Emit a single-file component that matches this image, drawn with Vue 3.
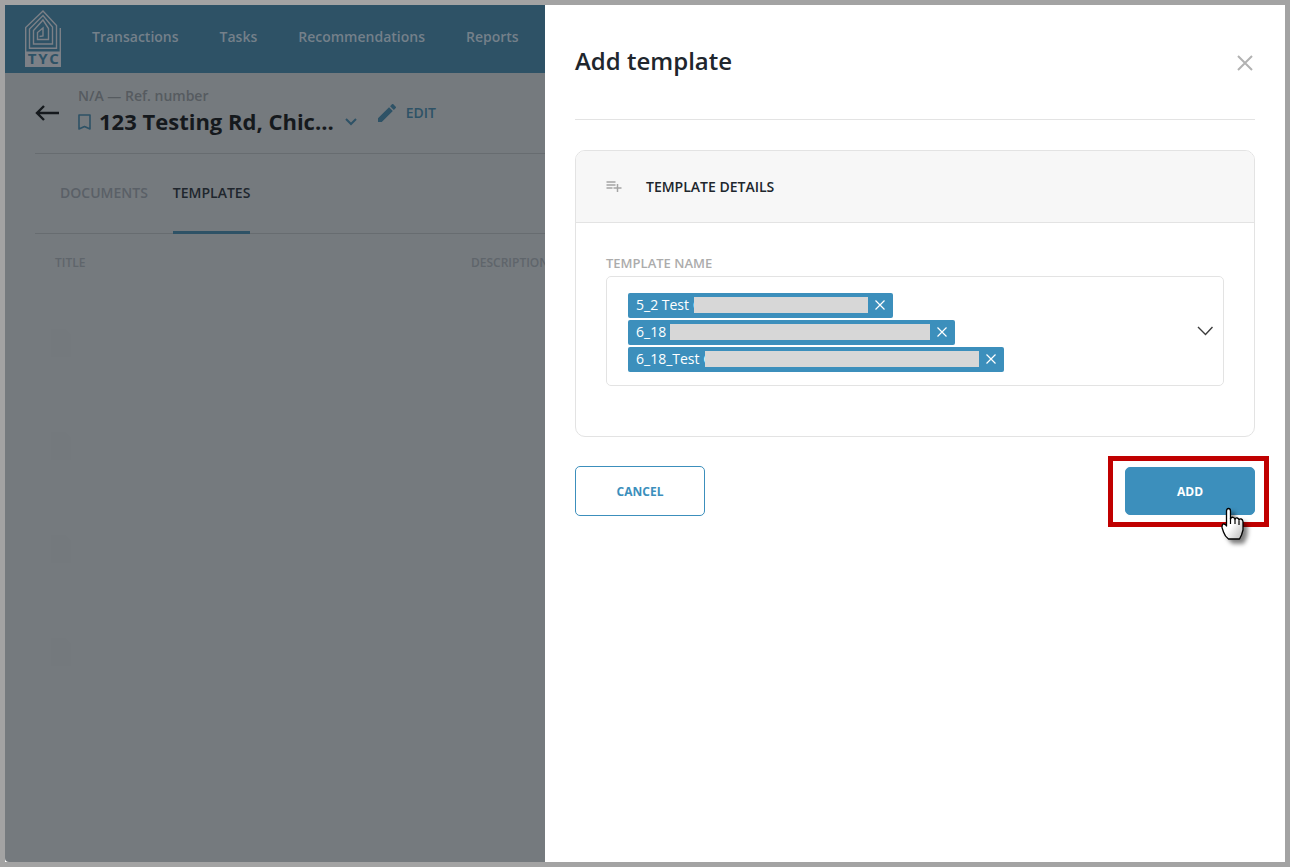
<template>
  <div class="app">
    <div class="page">
      <header class="navbar">
        <a href="#" class="logo" aria-label="TYC">
          <svg width="36" height="57" viewBox="0 0 36 57">
            <g fill="none" stroke="#7c8087" stroke-width="1.400">
              <path d="M0.700 42V17.500L18 1L31.500 15.500V38.300H4.500V19L18 5.500L27.500 17V34H8.500V20.500L18 10L23.500 18.500V29.500H12.500V22.500L18 18V26L14.500 26.500" />
              <path d="M35.300 18V42" />
            </g>
            <path d="M0 41.500H36V57H0Z" fill="#7c8087" />
            <text x="7 18 29" y="54" text-anchor="middle" class="logo-text">TYC</text>
          </svg>
        </a>
        <nav class="nav-links">
          <a v-for="link in links" :key="link" href="#">{{ link }}</a>
        </nav>
      </header>

      <main class="transaction">
        <div class="heading">
          <button class="icon-btn back" aria-label="Back">
            <svg width="25" height="16" viewBox="0 0 25 16" fill="none" stroke="#15191d" stroke-width="2.400">
              <path d="M24 8H2M9 1L2 8L9 15" />
            </svg>
          </button>
          <div class="heading-text">
            <p class="ref">N/A — Ref. number</p>
            <div class="address">
              <svg width="13" height="16" viewBox="0 0 13 16" fill="none" stroke="#2e5266" stroke-width="1.600">
                <path d="M1 1H12V15L6.500 12.500L1 15Z" stroke-linejoin="round" />
              </svg>
              <h1>123 Testing Rd, Chic...</h1>
              <button class="icon-btn" aria-label="More addresses">
                <svg width="12" height="8" viewBox="0 0 12 8" fill="none" stroke="#2e5266" stroke-width="2">
                  <path d="M1 1L6 6L11 1" />
                </svg>
              </button>
            </div>
          </div>
          <button class="edit">
            <svg width="18" height="18" viewBox="0 0 18 18" fill="#2e5266">
              <path d="M0 14.250V18H3.750L14.800 6.950L11.050 3.200ZM17.700 4.050A1 1 0 0 0 17.700 2.650L15.350 0.300A1 1 0 0 0 13.950 0.300L12.100 2.150L15.850 5.900Z" />
            </svg>
            <span>EDIT</span>
          </button>
        </div>

        <div class="tabs">
          <button
            v-for="tab in tabs"
            :key="tab"
            :class="{ active: activeTab === tab }"
            @click="activeTab = tab"
          >
            {{ tab }}
          </button>
        </div>

        <table class="documents">
          <thead>
            <tr>
              <th class="col-title">TITLE</th>
              <th>DESCRIPTION</th>
            </tr>
          </thead>
          <tbody>
            <tr v-for="row in 4" :key="row">
              <td>
                <svg width="20" height="28" viewBox="0 0 20 28">
                  <path d="M0 0H14L20 6V28H0Z" fill="#74797d" />
                  <path d="M5 11H16M5 15H16M5 19H12" stroke="#757a7e" />
                </svg>
              </td>
              <td></td>
            </tr>
          </tbody>
        </table>
      </main>
    </div>

    <aside class="drawer">
      <header class="drawer-head">
        <h2>Add template</h2>
        <button class="icon-btn" aria-label="Close">
          <svg width="20" height="20" viewBox="0 0 20 20" fill="none" stroke="#b2b2b2" stroke-width="2">
            <path d="M3 3L17 17M17 3L3 17" />
          </svg>
        </button>
      </header>

      <section class="card">
        <div class="card-head">
          <svg width="16" height="11" viewBox="0 0 16 11" fill="none" stroke="#a5a5a5" stroke-width="1.500">
            <path d="M0.500 1H9.500M0.500 4H9.500M0.500 7H6.500M11.500 3V11M7.500 7H15.500" />
          </svg>
          <h3>TEMPLATE DETAILS</h3>
        </div>
        <div class="card-body">
          <label for="template-name">TEMPLATE NAME</label>
          <div class="multiselect">
            <ul class="tags">
              <li v-for="(tag, index) in selected" :key="tag.name" class="tag">
                <span class="tag-name" :style="{ width: tag.nameWidth + 'px' }">{{ tag.name }}</span>
                <span class="tag-mask" :style="{ width: tag.maskWidth + 'px' }"></span>
                <button class="icon-btn remove" aria-label="Remove template" @click="selected.splice(index, 1)">
                  <svg width="10" height="10" viewBox="0 0 10 10" fill="none" stroke="#fff" stroke-width="1.200">
                    <path d="M0.500 0.500L9.500 9.500M9.500 0.500L0.500 9.500" />
                  </svg>
                </button>
              </li>
            </ul>
            <button id="template-name" class="icon-btn" aria-haspopup="listbox">
              <svg width="16" height="10" viewBox="0 0 16 10" fill="none" stroke="#3c3c3c" stroke-width="1.400">
                <path d="M1 1L8.500 8.500L15.500 1" />
              </svg>
            </button>
          </div>
        </div>
      </section>

      <footer class="actions">
        <button class="btn btn-outline">CANCEL</button>
        <div class="add-wrap">
          <button class="btn btn-primary">ADD</button>
          <div class="highlight"></div>
          <svg class="pointer" width="30" height="42" viewBox="0 0 30 42">
            <defs>
              <linearGradient id="hand" x1="0" y1="0" x2="1" y2="1">
                <stop offset="0.500" stop-color="#fff" />
                <stop offset="1" stop-color="#b8b8b8" />
              </linearGradient>
            </defs>
            <path
              d="M5.500 19V4Q5.500 1.500 7.500 1.500T9.500 4V12Q10 10 12 10.300T14 12.500Q14.500 10.600 16.200 11T18 13Q18.700 11.600 20.200 12T22 14.500V23L20.500 28L18.500 32H7.500Q4 29.500 2.500 25L1 20.500Q1 16.500 3 17T5.500 19Z"
              fill="url(#hand)"
              stroke="#000"
              stroke-width="1.300"
              stroke-linejoin="round"
            />
            <path d="M9.500 11V17M14 12.500V17M18 13.500V18" fill="none" stroke="#000" stroke-width="1.200" />
          </svg>
        </div>
      </footer>
    </aside>
  </div>
</template>

<script setup>
import { ref } from 'vue'

const links = ['Transactions', 'Tasks', 'Recommendations', 'Reports']
const tabs = ['DOCUMENTS', 'TEMPLATES']
const activeTab = ref('TEMPLATES')

const selected = ref([
  { name: '5_2 Test C', nameWidth: 58, maskWidth: 174 },
  { name: '6_18', nameWidth: 34, maskWidth: 260 },
  { name: '6_18_Test C', nameWidth: 69, maskWidth: 274 }
])
</script>

<style>
body {
  margin: 0;
}
</style>

<style scoped>
* {
  box-sizing: border-box;
}

.app {
  display: flex;
  min-height: 100vh;
  border: 5px solid #a3a3a3;
  background: #fff;
  font-family: 'Open Sans', 'Noto Sans', sans-serif;
  font-size: 14px;
}

h1,
h2,
h3,
p,
ul {
  margin: 0;
  padding: 0;
}

a {
  text-decoration: none;
}

button {
  font-family: inherit;
  cursor: pointer;
}

svg {
  display: block;
  flex: none;
}

.icon-btn {
  display: flex;
  align-items: center;
  justify-content: center;
  padding: 0;
  border: none;
  background: transparent;
}

.page {
  flex: 1;
  min-width: 0;
  overflow: hidden;
  background: #757a7e;
  border-bottom-left-radius: 4px;
}

.navbar {
  display: flex;
  align-items: center;
  gap: 31px;
  height: 68px;
  padding: 0 0 2px 20px;
  background: #2e5266;
}

.logo-text {
  font-size: 15px;
  font-weight: 700;
  fill: #2e5266;
}

.nav-links {
  display: flex;
  gap: 41px;
  padding-bottom: 2px;
}

.nav-links a {
  color: #74808a;
  font-weight: 600;
  line-height: 20px;
}

.transaction {
  padding-left: 30px;
}

.heading {
  display: flex;
  align-items: center;
  height: 81px;
  border-bottom: 1px solid #676c70;
}

.back {
  margin-right: 18px;
}

.heading-text {
  padding-bottom: 2px;
}

.ref {
  color: #565b60;
  font-weight: 600;
  line-height: 20px;
}

.address {
  display: flex;
  align-items: center;
  gap: 8px;
}

.address h1 {
  margin-right: 3px;
  padding-bottom: 2px;
  color: #15191d;
  font-size: 22px;
  line-height: 30px;
  white-space: nowrap;
}

.edit {
  display: flex;
  align-items: center;
  gap: 10px;
  margin-left: 21px;
  padding: 0;
  border: none;
  background: transparent;
  color: #2e5266;
  font-size: 14px;
  font-weight: 600;
}

.edit span {
  padding-bottom: 2px;
}

.tabs {
  display: flex;
  gap: 25px;
  height: 80px;
  padding-left: 25px;
  border-bottom: 1px solid #676c70;
}

.tabs button {
  height: 80px;
  padding: 0;
  border: none;
  border-bottom: 3px solid transparent;
  background: transparent;
  color: #5a6067;
  font-size: 14px;
  font-weight: 600;
}

.tabs button.active {
  border-bottom-color: #2e5266;
  color: #20262d;
}

.documents {
  width: 640px;
  border-collapse: collapse;
  table-layout: fixed;
}

.documents th {
  height: 57px;
  padding: 0 0 0 20px;
  color: #5f656b;
  font-size: 12px;
  font-weight: 600;
  text-align: left;
}

.documents .col-title {
  width: 416px;
}

.documents td {
  height: 103px;
  padding: 0 0 0 16px;
}

.drawer {
  flex: 0 1 740px;
  padding: 0 30px;
  background: #fff;
}

.drawer-head {
  display: flex;
  align-items: center;
  justify-content: space-between;
  height: 115px;
  padding-top: 2px;
  border-bottom: 1px solid #e3e3e3;
}

.drawer-head h2 {
  padding-bottom: 4px;
  color: #20262d;
  font-size: 24px;
  font-weight: 600;
  line-height: 32px;
}

.card {
  margin-top: 30px;
  border: 1px solid #e3e3e3;
  border-radius: 10px;
  overflow: hidden;
}

.card-head {
  display: flex;
  align-items: center;
  gap: 24px;
  height: 72px;
  padding: 0 30px;
  border-bottom: 1px solid #e3e3e3;
  background: #f7f7f7;
}

.card-head h3 {
  color: #20262d;
  font-size: 14px;
  font-weight: 600;
}

.card-body {
  padding: 30px 30px 50px;
}

.card-body label {
  display: block;
  color: #acacac;
  font-size: 13px;
  font-weight: 600;
  line-height: 20px;
  margin-bottom: 3px;
}

.multiselect {
  display: flex;
  align-items: center;
  justify-content: space-between;
  padding: 13px 10px 13px 21px;
  border: 1px solid #e3e3e3;
  border-radius: 5px;
}

.tags {
  display: flex;
  flex-direction: column;
  align-items: flex-start;
  gap: 2px;
  padding-top: 3px;
  list-style: none;
}

.tag {
  display: flex;
  align-items: center;
  height: 25px;
  padding: 0 1px 1px 8px;
  border-radius: 2px;
  background: #3c8fbc;
  color: #fff;
}

.tag-name {
  overflow: hidden;
  line-height: 24px;
  white-space: nowrap;
}

.tag-mask {
  height: 16px;
  background: #d7d7d7;
}

.remove {
  width: 24px;
  height: 24px;
}

.actions {
  display: flex;
  align-items: center;
  justify-content: space-between;
  margin-top: 29px;
}

.btn {
  width: 130px;
  height: 50px;
  border: 1px solid #3c8fbc;
  border-radius: 5px;
  font-size: 12px;
  font-weight: 700;
}

.btn-outline {
  background: #fff;
  color: #3c8fbc;
}

.btn-primary {
  display: block;
  height: 48px;
  background: #3c8fbc;
  color: #fff;
}

.add-wrap {
  position: relative;
}

.highlight {
  position: absolute;
  inset: -11px -14px -12px -17px;
  border: 5px solid #c00000;
  pointer-events: none;
}

.pointer {
  position: absolute;
  top: 40px;
  right: 4px;
  filter: drop-shadow(4px 4px 2px rgba(0, 0, 0, 0.5));
  pointer-events: none;
}
</style>
